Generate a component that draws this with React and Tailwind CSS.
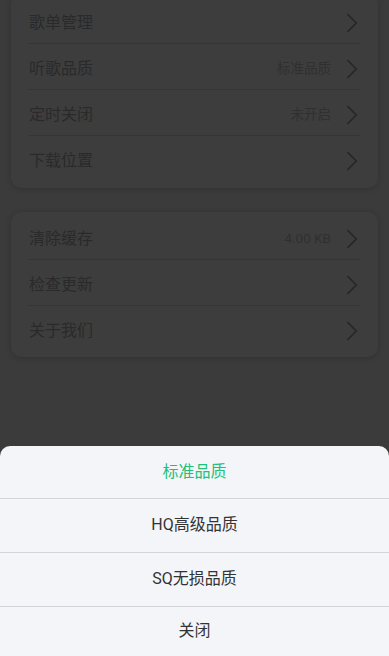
import React from "react";

const font = { fontFamily: 'Roboto, "Noto Sans CJK SC", "Noto Sans", sans-serif' };

function Chevron() {
  return (
    <svg width="12" height="20" viewBox="0 0 12 20" className="shrink-0">
      <polyline points="1.5,1.2 10.2,10 1.5,18.8" fill="none" stroke="#282828" strokeWidth="1.7" strokeLinejoin="miter" />
    </svg>
  );
}

function Row({ title, value, last }) {
  return (
    <div className={"h-[46px] pt-[4px] flex items-center mx-[17px] " + (last ? "" : "border-b border-[#353535]")}>
      <span className="flex-1 text-[16px] text-[#2a2a2a] pl-[1px]">{title}</span>
      {value && <span className="text-[13.5px] text-[#303030] mr-[15px]">{value}</span>}
      <span className="mr-[3px]"><Chevron /></span>
    </div>
  );
}

export default function App() {
  return (
    <div className="relative w-[389px] h-[656px] overflow-hidden bg-[#3b3b3b]" style={font}>
      <div className="flex flex-col gap-[24px] px-[11px] mt-[-6px]">
        <div className="bg-[#3d3d3d] rounded-[10px] pt-[4px] pb-[6px] shadow-[0_1px_6px_rgba(0,0,0,0.18)]">
          <Row title="歌单管理" />
          <Row title="听歌品质" value="标准品质" />
          <Row title="定时关闭" value="未开启" />
          <Row title="下载位置" last />
        </div>
        <div className="bg-[#3d3d3d] rounded-[10px] pt-[2px] pb-[5px] shadow-[0_1px_6px_rgba(0,0,0,0.18)]">
          <Row title="清除缓存" value="4.00 KB" />
          <Row title="检查更新" />
          <Row title="关于我们" last />
        </div>
      </div>

      <div className="absolute left-0 right-0 top-[446px] bottom-0 bg-[#f4f5f9] rounded-t-[10px] flex flex-col">
        <div className="h-[53px] flex items-center justify-center pb-[1px] border-b border-[#d3d4d8] text-[16px] text-[#22c07a]">标准品质</div>
        <div className="h-[54px] flex items-center justify-center pb-[1px] border-b border-[#d3d4d8] text-[16px] text-[#333]">HQ高级品质</div>
        <div className="h-[54px] flex items-center justify-center pb-[1px] border-b border-[#d3d4d8] text-[16px] text-[#333]">SQ无损品质</div>
        <div className="flex-1 flex items-center justify-center pb-[1px] text-[16px] text-[#333]">关闭</div>
      </div>
    </div>
  );
}
